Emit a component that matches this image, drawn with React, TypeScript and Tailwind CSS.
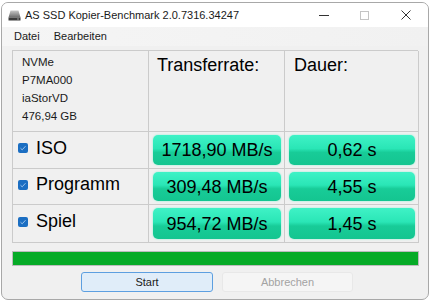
import React from "react";

const rows = [
  { label: "ISO", rate: "1718,90 MB/s", time: "0,62 s" },
  { label: "Programm", rate: "309,48 MB/s", time: "4,55 s" },
  { label: "Spiel", rate: "954,72 MB/s", time: "1,45 s" },
];

function DriveIcon() {
  return (
    <svg width="13" height="11" viewBox="0 0 13 11">
      <defs>
        <linearGradient id="drv" x1="0" y1="0" x2="0" y2="1">
          <stop offset="0" stopColor="#c8c8c8" />
          <stop offset="1" stopColor="#6a6a6a" />
        </linearGradient>
      </defs>
      <path d="M2.5 0.5 H10.5 L12.5 7.5 H0.5 Z" fill="url(#drv)" />
      <rect x="0.5" y="7.5" width="12" height="3" fill="#3c3c3c" />
      <rect x="9" y="8.5" width="2" height="1" fill="#9a9a9a" />
    </svg>
  );
}

function CheckBox() {
  return (
    <span className="flex h-[10px] w-[10px] items-center justify-center rounded-[2px] bg-[#1b6ec2]">
      <svg width="8" height="8" viewBox="0 0 8 8">
        <path d="M1.5 4.2 L3.2 5.8 L6.5 2.2" stroke="#9cc4ec" strokeWidth="1" fill="none" />
      </svg>
    </span>
  );
}

function GreenValue({ text }: { text: string }) {
  return (
    <div className="flex h-full w-full items-center justify-center rounded-[5px] bg-[linear-gradient(180deg,#3ff2c6_0%,#2ae6b6_45%,#18cc98_58%,#14c590_100%)] pt-[1px] text-[18px] text-black shadow-[0_0_2px_#7ef0d0]">
      {text}
    </div>
  );
}

export default function App() {
  return (
    <div className="h-[301px] w-[430px] bg-white pl-[1px] pt-[2px] font-['Liberation_Sans',Arial,sans-serif]">
      <div className="flex h-[298px] w-[428px] flex-col overflow-hidden rounded-[7px] border border-[#a8a8a8] bg-[#f0f0f0]">
        {/* Title bar */}
        <div className="flex h-[24px] shrink-0 items-center bg-white">
          <div className="ml-[6px] flex items-center">
            <DriveIcon />
          </div>
          <span className="ml-[4px] text-[11px] text-[#1a1a1a]">
            AS SSD Kopier-Benchmark 2.0.7316.34247
          </span>
          <div className="ml-auto flex h-full items-center">
            <div className="flex h-full w-[40px] items-center justify-center">
              <span className="block h-px w-[10px] bg-[#333]" />
            </div>
            <div className="flex h-full w-[40px] items-center justify-center">
              <span className="block h-[9px] w-[9px] border border-[#c4c4c4]" />
            </div>
            <div className="flex h-full w-[44px] items-center justify-center">
              <svg width="10" height="10" viewBox="0 0 10 10">
                <path d="M0.5 0.5 L9.5 9.5 M9.5 0.5 L0.5 9.5" stroke="#333" strokeWidth="1" />
              </svg>
            </div>
          </div>
        </div>

        {/* Menu */}
        <div className="flex h-[19px] shrink-0 items-center gap-[14px] bg-[linear-gradient(90deg,#f5f5f5,#f1f1f1)] pl-[12px] text-[11px] text-[#1a1a1a]">
          <span>Datei</span>
          <span>Bearbeiten</span>
        </div>

        {/* Content */}
        <div className="flex flex-col px-[10px] pt-[4px]">
          <div className="grid grid-cols-[136px_136px_134px] grid-rows-[81px_37px_36px_38px] border-l border-t border-[#cbcbcb]">
            <div className="flex flex-col gap-[5px] border-b border-r border-[#cbcbcb] pl-[9px] pt-[5px] text-[11.5px] leading-[13px] text-[#1a1a1a]">
              <span>NVMe</span>
              <span>P7MA000</span>
              <span>iaStorVD</span>
              <span>476,94 GB</span>
            </div>
            <div className="border-b border-r border-[#cbcbcb] pl-[8px] pt-[5px] text-[18px] leading-none text-black">
              Transferrate:
            </div>
            <div className="border-b border-r border-[#cbcbcb] pl-[9px] pt-[5px] text-[18px] leading-none text-black">
              Dauer:
            </div>
            {rows.map((r) => (
              <React.Fragment key={r.label}>
                <div className="flex items-center gap-[8px] border-b border-r border-[#cbcbcb] pb-[4px] pl-[5px] text-[18px] text-black">
                  <CheckBox />
                  <span>{r.label}</span>
                </div>
                <div className="border-b border-r border-[#cbcbcb] pb-[3px] pl-[4px] pr-[3px] pt-[3px]">
                  <GreenValue text={r.rate} />
                </div>
                <div className="border-b border-r border-[#cbcbcb] pb-[3px] pl-[4px] pr-[3px] pt-[3px]">
                  <GreenValue text={r.time} />
                </div>
              </React.Fragment>
            ))}
          </div>

          {/* Progress */}
          <div className="mt-[8px] h-[15px] w-[407px] border border-[#bcbcbc] bg-[#e6e6e6]">
            <div className="h-full w-full bg-[#06ab27]" />
          </div>

          {/* Buttons */}
          <div className="mt-[6px] flex gap-[9px] pl-[69px]">
            <button className="h-[20px] w-[132px] rounded-[3px] border border-[#5d9fe0] bg-[#e0edf9] text-[11px] text-[#1a1a1a]">
              Start
            </button>
            <button className="h-[20px] w-[131px] rounded-[3px] border border-[#e8e8e8] bg-[#f5f5f5] text-[11px] text-[#a3a3a3]">
              Abbrechen
            </button>
          </div>
        </div>
      </div>
    </div>
  );
}
